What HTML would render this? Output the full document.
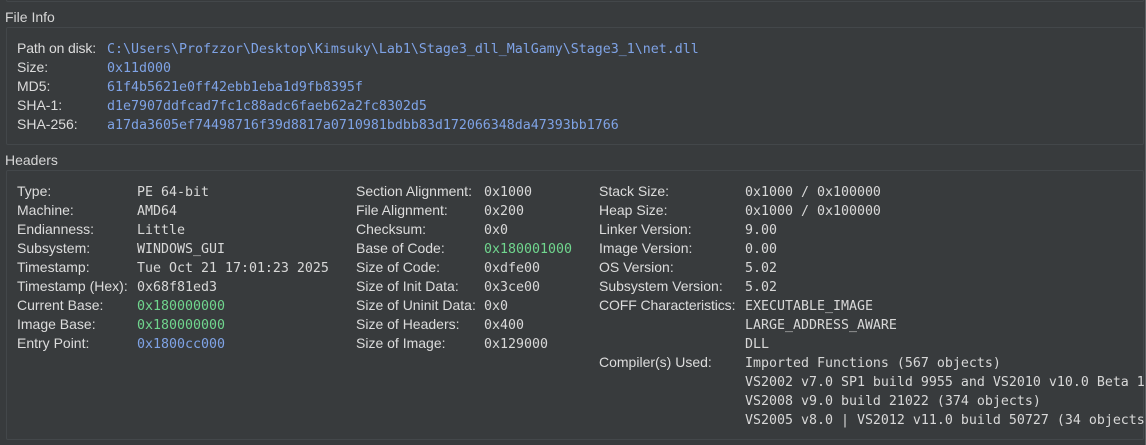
<!DOCTYPE html>
<html>
<head>
<meta charset="utf-8">
<style>
html,body{margin:0;padding:0;background:#383b3d;}
#r{position:relative;width:1146px;height:445px;overflow:hidden;background:#383b3d;}
.p{position:absolute;border:1px solid #43474a;box-sizing:border-box;border-radius:2px;}
.l,.m,.h{position:absolute;white-space:pre;height:19px;line-height:19px;}
.l{font:14px/19px "Liberation Sans",sans-serif;color:#dcdcdc;margin-top:1px;}
.h{font:14px/19px "Liberation Sans",sans-serif;color:#d6d6d6;margin-top:0;}
.m{font:13.29px/19px "DejaVu Sans Mono",monospace;color:#d8d8d8;margin-top:2px;}
.b{color:#7fa3e6;}
.g{color:#70d68e;}
</style>
</head>
<body>
<div id="r">
<div class="p" style="left:6px;top:-20px;width:1138px;height:22px;"></div>
<div class="p" style="left:6px;top:27px;width:1138px;height:118px;"></div>
<div class="p" style="left:6px;top:170px;width:1138px;height:270px;"></div>
<div style="position:absolute;left:1145px;top:0;width:1px;height:445px;background:#5f6366;"></div>

<div class="h" style="left:5px;top:8px;">File Info</div>
<div class="l" style="left:17px;top:38px;letter-spacing:-.15px;">Path on disk:</div><div class="m b" style="left:107px;top:38px;">C:\Users\Profzzor\Desktop\Kimsuky\Lab1\Stage3_dll_MalGamy\Stage3_1\net.dll</div>
<div class="l" style="left:17px;top:57px;">Size:</div><div class="m b" style="left:107px;top:57px;">0x11d000</div>
<div class="l" style="left:17px;top:76px;">MD5:</div><div class="m b" style="left:107px;top:76px;">61f4b5621e0ff42ebb1eba1d9fb8395f</div>
<div class="l" style="left:17px;top:95px;">SHA-1:</div><div class="m b" style="left:107px;top:95px;">d1e7907ddfcad7fc1c88adc6faeb62a2fc8302d5</div>
<div class="l" style="left:17px;top:114px;">SHA-256:</div><div class="m b" style="left:107px;top:114px;">a17da3605ef74498716f39d8817a0710981bdbb83d172066348da47393bb1766</div>

<div class="h" style="left:5px;top:151px;">Headers</div>

<div class="l" style="left:17px;top:181px;">Type:</div><div class="m" style="left:137px;top:181px;">PE 64-bit</div>
<div class="l" style="left:17px;top:200px;">Machine:</div><div class="m" style="left:137px;top:200px;">AMD64</div>
<div class="l" style="left:17px;top:219px;">Endianness:</div><div class="m" style="left:137px;top:219px;">Little</div>
<div class="l" style="left:17px;top:238px;">Subsystem:</div><div class="m" style="left:137px;top:238px;">WINDOWS_GUI</div>
<div class="l" style="left:17px;top:257px;">Timestamp:</div><div class="m" style="left:137px;top:257px;">Tue Oct 21 17:01:23 2025</div>
<div class="l" style="left:17px;top:276px;">Timestamp (Hex):</div><div class="m" style="left:137px;top:276px;">0x68f81ed3</div>
<div class="l" style="left:17px;top:295px;">Current Base:</div><div class="m g" style="left:137px;top:295px;">0x180000000</div>
<div class="l" style="left:17px;top:314px;">Image Base:</div><div class="m g" style="left:137px;top:314px;">0x180000000</div>
<div class="l" style="left:17px;top:333px;">Entry Point:</div><div class="m b" style="left:137px;top:333px;">0x1800cc000</div>

<div class="l" style="left:356px;top:181px;">Section Alignment:</div><div class="m" style="left:484px;top:181px;">0x1000</div>
<div class="l" style="left:356px;top:200px;">File Alignment:</div><div class="m" style="left:484px;top:200px;">0x200</div>
<div class="l" style="left:356px;top:219px;">Checksum:</div><div class="m" style="left:484px;top:219px;">0x0</div>
<div class="l" style="left:356px;top:238px;">Base of Code:</div><div class="m g" style="left:484px;top:238px;">0x180001000</div>
<div class="l" style="left:356px;top:257px;">Size of Code:</div><div class="m" style="left:484px;top:257px;">0xdfe00</div>
<div class="l" style="left:356px;top:276px;">Size of Init Data:</div><div class="m" style="left:484px;top:276px;">0x3ce00</div>
<div class="l" style="left:356px;top:295px;">Size of Uninit Data:</div><div class="m" style="left:484px;top:295px;">0x0</div>
<div class="l" style="left:356px;top:314px;">Size of Headers:</div><div class="m" style="left:484px;top:314px;">0x400</div>
<div class="l" style="left:356px;top:333px;">Size of Image:</div><div class="m" style="left:484px;top:333px;">0x129000</div>

<div class="l" style="left:599px;top:181px;">Stack Size:</div><div class="m" style="left:745px;top:181px;">0x1000 / 0x100000</div>
<div class="l" style="left:599px;top:200px;">Heap Size:</div><div class="m" style="left:745px;top:200px;">0x1000 / 0x100000</div>
<div class="l" style="left:599px;top:219px;">Linker Version:</div><div class="m" style="left:745px;top:219px;">9.00</div>
<div class="l" style="left:599px;top:238px;">Image Version:</div><div class="m" style="left:745px;top:238px;">0.00</div>
<div class="l" style="left:599px;top:257px;">OS Version:</div><div class="m" style="left:745px;top:257px;">5.02</div>
<div class="l" style="left:599px;top:276px;">Subsystem Version:</div><div class="m" style="left:745px;top:276px;">5.02</div>
<div class="l" style="left:599px;top:295px;letter-spacing:-.1px;">COFF Characteristics:</div><div class="m" style="left:745px;top:295px;">EXECUTABLE_IMAGE</div>
<div class="m" style="left:745px;top:314px;">LARGE_ADDRESS_AWARE</div>
<div class="m" style="left:745px;top:333px;">DLL</div>
<div class="l" style="left:599px;top:352px;">Compiler(s) Used:</div><div class="m" style="left:745px;top:352px;">Imported Functions (567 objects)</div>
<div class="m" style="left:745px;top:371px;">VS2002 v7.0 SP1 build 9955 and VS2010 v10.0 Beta 1</div>
<div class="m" style="left:745px;top:390px;">VS2008 v9.0 build 21022 (374 objects)</div>
<div class="m" style="left:745px;top:409px;">VS2005 v8.0 | VS2012 v11.0 build 50727 (34 objects</div>
</div>
</body>
</html>
